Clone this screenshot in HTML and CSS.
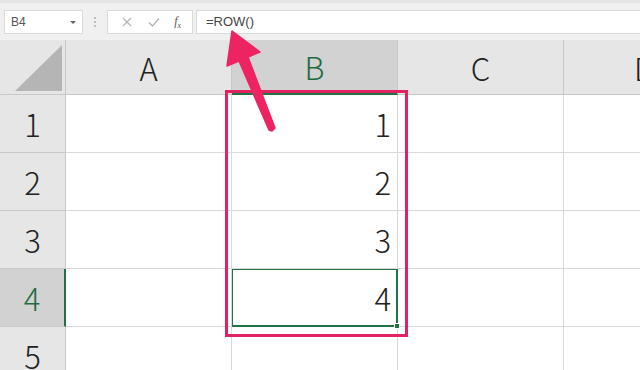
FILE: index.html
```html
<!DOCTYPE html>
<html lang="ja">
<head>
  <meta charset="UTF-8">
  <title>ROW関数</title>
  <link rel="stylesheet" href="styles.css">
</head>
<body>
  <div class="app">
    <div class="formula-bar">
      <div class="name-box">
        <span>B4</span>
        <span class="caret"></span>
      </div>
      <div class="grip"><i></i><i></i><i></i></div>
      <div class="fx-buttons">
        <svg width="12" height="12" viewBox="0 0 12 12"><path d="M2 2L10 10M10 2L2 10" stroke="#b4b4b4" stroke-width="1.3" fill="none"/></svg>
        <svg width="14" height="12" viewBox="0 0 14 12"><path d="M2 6.5L5.5 10L12 2.5" stroke="#b4b4b4" stroke-width="1.4" fill="none"/></svg>
        <span class="fx">f<sub>x</sub></span>
      </div>
      <div class="formula-input">=ROW()</div>
    </div>

    <div class="sheet">
      <div class="corner">
        <svg width="48" height="47" viewBox="0 0 48 47"><polygon points="0,46 47,0 47,46" fill="#b5b5b5"/></svg>
      </div>
      <div class="col-head">A</div>
      <div class="col-head selected">B</div>
      <div class="col-head">C</div>
      <div class="col-head clip">D</div>

      <div class="row-head">1</div>
      <div class="cell"></div>
      <div class="cell num">1</div>
      <div class="cell"></div>
      <div class="cell"></div>

      <div class="row-head">2</div>
      <div class="cell"></div>
      <div class="cell num">2</div>
      <div class="cell"></div>
      <div class="cell"></div>

      <div class="row-head">3</div>
      <div class="cell"></div>
      <div class="cell num">3</div>
      <div class="cell"></div>
      <div class="cell"></div>

      <div class="row-head selected">4</div>
      <div class="cell"></div>
      <div class="cell num active">4</div>
      <div class="cell"></div>
      <div class="cell"></div>

      <div class="row-head">5</div>
      <div class="cell"></div>
      <div class="cell"></div>
      <div class="cell"></div>
      <div class="cell"></div>
    </div>

    <!-- annotation -->
    <div class="highlight"></div>
    <svg class="arrow" width="640" height="370" viewBox="0 0 640 370">
      <polygon points="232,31 260,52 248,57 275,128 272,131 269,130 239,61 227,66" fill="#ee2361" stroke="#ee2361" stroke-width="1.5" stroke-linejoin="round"/>
    </svg>
  </div>
</body>
</html>
```

FILE: styles.css
```css
body {
  margin: 0;
  padding: 0;
  background-color: #fff;
  font-family: "Noto Sans CJK JP", "Noto Sans", sans-serif;
}
.app {
  position: relative;
  width: 640px;
  height: 370px;
  overflow: hidden;
}

/* formula bar */
.formula-bar {
  height: 40px;
  box-sizing: border-box;
  padding: 10px 0 0 4px;
  background-color: #f0f0f0;
  border-top: 3px solid #e4e4e4;
  display: flex;
  align-items: flex-start;
}
.formula-bar > div {
  height: 24px;
  box-sizing: border-box;
}
.name-box {
  width: 79px;
  background-color: #fff;
  border: 1px solid #dadada;
  display: flex;
  align-items: center;
  justify-content: space-between;
  padding: 0 6px 0 6px;
  font-family: "Liberation Sans", sans-serif;
  font-size: 12px;
  color: #555;
  margin-top: -3px;
}
.caret {
  width: 0;
  height: 0;
  border-left: 3px solid transparent;
  border-right: 3px solid transparent;
  border-top: 3px solid #666;
}
.grip {
  width: 24px;
  display: flex;
  flex-direction: column;
  align-items: center;
  justify-content: center;
  gap: 2px;
  margin-top: -3px;
}
.grip i {
  width: 2px;
  height: 2px;
  background-color: #bdbdbd;
}
.fx-buttons {
  width: 86px;
  background-color: #fff;
  border: 1px solid #dadada;
  display: flex;
  align-items: center;
  justify-content: space-around;
  padding: 0 4px 0 6px;
  margin-top: -3px;
}
.fx {
  font-family: "Liberation Serif", serif;
  font-style: italic;
  font-size: 12px;
  color: #555;
}
.fx sub {
  font-size: 8px;
}
.formula-input {
  flex: 1;
  margin-left: 3px;
  background-color: #fff;
  border: 1px solid #dadada;
  border-right: none;
  padding: 3px 0 0 9px;
  font-family: "Liberation Sans", sans-serif;
  font-size: 13px;
  color: #444;
  margin-top: -3px;
}

/* sheet */
.sheet {
  display: grid;
  grid-template-columns: 66px 166px 166px 166px 1fr;
  grid-template-rows: 55px repeat(5, 58px);
  font-weight: 300;
  font-size: 31px;
  color: #222;
}
.corner,
.col-head,
.row-head {
  background-color: #e6e6e6;
  border-right: 1px solid #c8c8c8;
  border-bottom: 1px solid #c8c8c8;
  box-sizing: border-box;
  display: flex;
  align-items: center;
  justify-content: center;
}
.corner {
  align-items: flex-end;
  justify-content: flex-end;
  padding: 0 2px 2px 0;
}
.col-head.clip {
  justify-content: flex-start;
  padding-left: 70px;
  border-right: none;
}
.col-head.selected {
  background-color: #d2d2d2;
  color: #1e6b3f;
  border-bottom: 2px solid #217346;
}
.row-head.selected {
  background-color: #d2d2d2;
  color: #1e6b3f;
  border-right: 2px solid #217346;
}
.cell {
  border-right: 1px solid #d9d9d9;
  border-bottom: 1px solid #d9d9d9;
  box-sizing: border-box;
}
.cell.num {
  display: flex;
  align-items: center;
  justify-content: flex-end;
  padding-right: 6px;
}
.cell.active {
  position: relative;
  box-shadow: inset 0 0 0 1px #217346;
  border-color: #217346;
}
.cell.active::after {
  content: "";
  position: absolute;
  right: -3px;
  bottom: -3px;
  width: 4px;
  height: 4px;
  background-color: #217346;
  border: 1px solid #fff;
}

/* annotation overlay */
.highlight {
  position: absolute;
  left: 225px;
  top: 90px;
  width: 183px;
  height: 247px;
  box-sizing: border-box;
  border: 3px solid #e22160;
}
.arrow {
  position: absolute;
  left: 0;
  top: 0;
}
```
